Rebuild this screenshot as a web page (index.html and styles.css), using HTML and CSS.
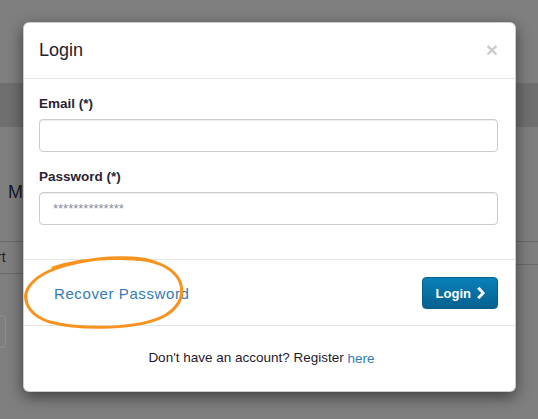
FILE: index.html
```html
<!DOCTYPE html>
<html lang="en">
<head>
	<meta charset="UTF-8">
	<title>Login</title>
	<link rel="stylesheet" href="styles.css">
</head>
<body>

	<div class="page">
		<div class="band"></div>
		<div class="intro">Mu</div>
		<div class="tabs">
			<div class="tab">rt</div>
			<div class="tab-rest"></div>
		</div>
		<div class="stub"></div>
	</div>

	<div class="modal">
		<div class="modal-header">
			<h4 class="modal-title">Login</h4>
			<button class="close">&times;</button>
		</div>

		<div class="modal-body">
			<div class="form-group">
				<label class="label">Email (*)</label>
				<input class="input" type="text">
			</div>
			<div class="form-group">
				<label class="label">Password (*)</label>
				<input class="input" type="text" placeholder="**************">
			</div>
		</div>

		<div class="modal-footer">
			<a class="recover" href="#">Recover Password</a>
			<button class="btn-login">Login
				<svg class="chev" width="11" height="12" viewBox="0 0 11 12"><path d="M2 1.5 L4.6 0 L10 6 L4.6 12 L2 10.5 L6.2 6 Z" fill="#fff"/></svg>
			</button>
		</div>

		<div class="register">Don't have an account? Register <a class="here" href="#">here</a></div>
	</div>

	<svg class="scribble" width="538" height="419" viewBox="0 0 538 419">
		<path d="M53 268 C80 258 140 254 162 265 C187 277 188 301 166 315 C140 330 80 330 50 322 C25 314 20 295 32 283 C45 268 80 260 110 258 C130 257 148 259 157 263" fill="none" stroke="#f7931e" stroke-width="3" stroke-linecap="round"/>
	</svg>

</body>
</html>
```

FILE: styles.css
```css
		html, body {
			margin: 0;
			height: 100%;
		}
		body {
			background: #7f7f7f;
			font-family: "Liberation Sans", Arial, sans-serif;
			font-size: 14px;
			color: #333;
			overflow: hidden;
			position: relative;
		}

		/* dimmed page behind the dialog */
		.page {
			padding-top: 83px;
		}
		.band {
			height: 44px;
			background: #6f6f6f;
		}
		.intro {
			padding: 55px 0 0 8px;
			height: 59px;
			font-size: 18px;
			color: #161a2a;
		}
		.tabs {
			display: flex;
			align-items: flex-start;
			border-top: 1px solid #6a6a6a;
		}
		.tab {
			width: 300px;
			height: 31px;
			line-height: 30px;
			margin-left: -3px;
			border-bottom: 1px solid #6a6a6a;
			color: #1a1d2a;
		}
		.tab-rest {
			flex: 1;
			height: 22px;
			border-bottom: 1px solid #6a6a6a;
		}
		.stub {
			margin: 41px 0 0 -60px;
			width: 64px;
			height: 31px;
			border: 1px solid #8e8e8e;
			border-radius: 4px;
		}

		/* dialog */
		.modal {
			position: absolute;
			left: 23px;
			top: 22px;
			width: 493px;
			box-sizing: border-box;
			background: #fff;
			border: 1px solid rgba(0, 0, 0, .2);
			border-radius: 6px;
			box-shadow: 0 5px 15px rgba(0, 0, 0, .5);
		}
		.modal-header {
			display: flex;
			justify-content: space-between;
			align-items: flex-start;
			padding: 15px 17px 15px 15px;
			border-bottom: 1px solid #e5e5e5;
		}
		.modal-title {
			margin: 0;
			font-size: 18px;
			font-weight: normal;
			line-height: 25px;
			color: #1f2230;
		}
		.close {
			margin-top: 1px;
			padding: 0;
			border: 0;
			background: none;
			font-family: "Liberation Sans", Arial, sans-serif;
			font-size: 21px;
			font-weight: bold;
			line-height: 1;
			color: #000;
			opacity: .2;
		}
		.modal-body {
			padding: 15px 17px 19px 15px;
		}
		.form-group {
			margin-bottom: 15px;
		}
		.label {
			display: block;
			margin-bottom: 5px;
			font-size: 13.5px;
			font-weight: bold;
			line-height: 20px;
			color: #2a1f33;
		}
		.input {
			display: block;
			width: 100%;
			height: 33px;
			box-sizing: border-box;
			padding: 6px 13px;
			border: 1px solid #ccc;
			border-radius: 4px;
			box-shadow: inset 0 1px 1px rgba(0, 0, 0, .075);
			font-family: "Liberation Sans", Arial, sans-serif;
			font-size: 13px;
		}
		.input::placeholder {
			color: #8a8f99;
		}
		.modal-footer {
			display: flex;
			justify-content: space-between;
			align-items: center;
			padding: 17px 17px 16px 15px;
			border-top: 1px solid #e5e5e5;
			border-bottom: 1px solid #e5e5e5;
		}
		.recover {
			padding-left: 15px;
			color: #337ab7;
			text-decoration: none;
			font-size: 15px;
			letter-spacing: .6px;
		}
		.btn-login {
			display: inline-flex;
			align-items: center;
			gap: 4px;
			height: 32px;
			padding: 0 11px 0 13px;
			border: 1px solid #05618e;
			border-radius: 4px;
			background: linear-gradient(#0a80b8, #04618f);
			color: #fff;
			font-family: "Liberation Sans", Arial, sans-serif;
			font-size: 13px;
			font-weight: bold;
		}
		.register {
			padding: 22px 31px 22px 15px;
			font-size: 13.5px;
			line-height: 20px;
			text-align: center;
			color: #1f1a2a;
		}
		.here {
			color: #337ab7;
			text-decoration: none;
			vertical-align: -1px;
		}

		/* hand-drawn mark over the dialog */
		.scribble {
			position: absolute;
			left: 0;
			top: 0;
			pointer-events: none;
		}
```
